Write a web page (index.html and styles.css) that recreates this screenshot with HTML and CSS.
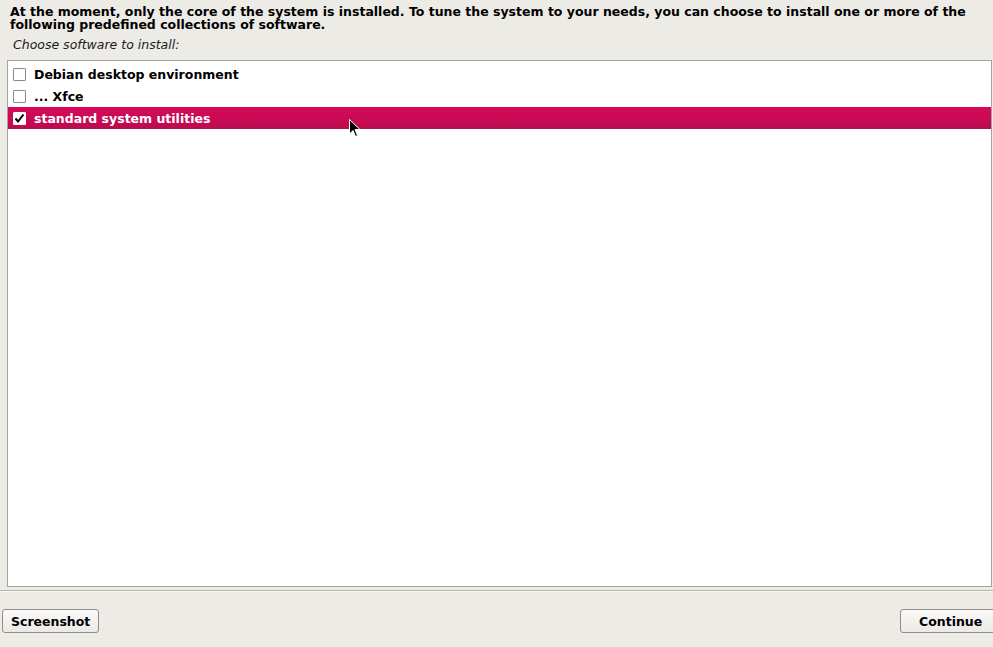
FILE: index.html
```html
<!DOCTYPE html>
<html>
<head>
<meta charset="utf-8">
<link rel="stylesheet" href="styles.css">
</head>
<body>
<div class="page">
  <div class="intro">At the moment, only the core of the system is installed. To tune the system to your needs, you can choose to install one or more of the following predefined collections of software.</div>
  <div class="prompt">Choose software to install:</div>
  <div class="list">
    <div class="row"><span class="box"></span><span class="label">Debian desktop environment</span></div>
    <div class="row"><span class="box"></span><span class="label">... Xfce</span></div>
    <div class="row selected"><span class="box checked"><svg width="11" height="11" viewBox="0 0 11 11"><path d="M1.5 5.5 L4 8.5 L9.5 1.5" fill="none" stroke="#000" stroke-width="2"/></svg></span><span class="label">standard system utilities</span></div>
  </div>
  <div class="sep"></div>
  <div class="footer">
    <button class="btn">Screenshot</button>
    <button class="btn btn-continue">Continue</button>
  </div>
  <svg class="cursor" width="12" height="19" viewBox="0 0 12 19"><path d="M0.5 0.5 L0.5 15 L4 11.5 L6.5 17.5 L8.5 16.5 L6 10.5 L11 10.5 Z" fill="#000" stroke="#fff" stroke-width="1"/></svg>
</div>
</body>
</html>
```
FILE: styles.css
```css
html, body {
  margin: 0;
  padding: 0;
}
body {
  background: #edebe6;
  font-family: "DejaVu Sans", sans-serif;
  color: #000;
}
.page {
  position: relative;
  width: 993px;
  height: 647px;
  display: flex;
  flex-direction: column;
  overflow: hidden;
}
.intro {
  font-weight: bold;
  font-size: 12.5px;
  line-height: 13px;
  padding: 5px 18px 0 10px;
}
.prompt {
  font-style: italic;
  font-size: 12.5px;
  line-height: 15px;
  padding: 6px 0 0 13px;
  color: #1a1a1a;
}
.list {
  margin: 8px 1px 0 7px;
  height: 523px;
  background: #fff;
  border: 1px solid #a5a39f;
  padding-top: 2px;
}
.row {
  height: 22px;
  display: flex;
  align-items: center;
  font-weight: bold;
  font-size: 12.5px;
  padding-left: 5px;
}
.row.selected {
  background: linear-gradient(#d6085a, #c80a54 60%, #b90c4d);
  color: #fff;
}
.box {
  width: 11px;
  height: 11px;
  border: 1px solid #8c8a86;
  background: #fff;
  border-radius: 1px;
  display: flex;
  align-items: center;
  justify-content: center;
  margin-right: 8px;
}
.box.checked {
  border-color: #fff;
}
.sep {
  margin-top: 3px;
  height: 1px;
  background: #b8b6b1;
  border-bottom: 1px solid #f8f7f4;
}
.footer {
  display: flex;
  justify-content: space-between;
  padding: 17px 0 0 2px;
}
.btn {
  font-family: "DejaVu Sans", sans-serif;
  font-weight: bold;
  font-size: 12.5px;
  height: 24px;
  padding: 0 8px;
  border: 1px solid #8f8d89;
  border-radius: 3px;
  background: linear-gradient(#fbfaf9, #ebe9e5);
  color: #000;
}
.btn-continue {
  width: 101px;
  margin-right: -8px;
  text-align: left;
  padding-left: 18px;
}
.cursor {
  position: absolute;
  left: 349px;
  top: 119px;
}
```
